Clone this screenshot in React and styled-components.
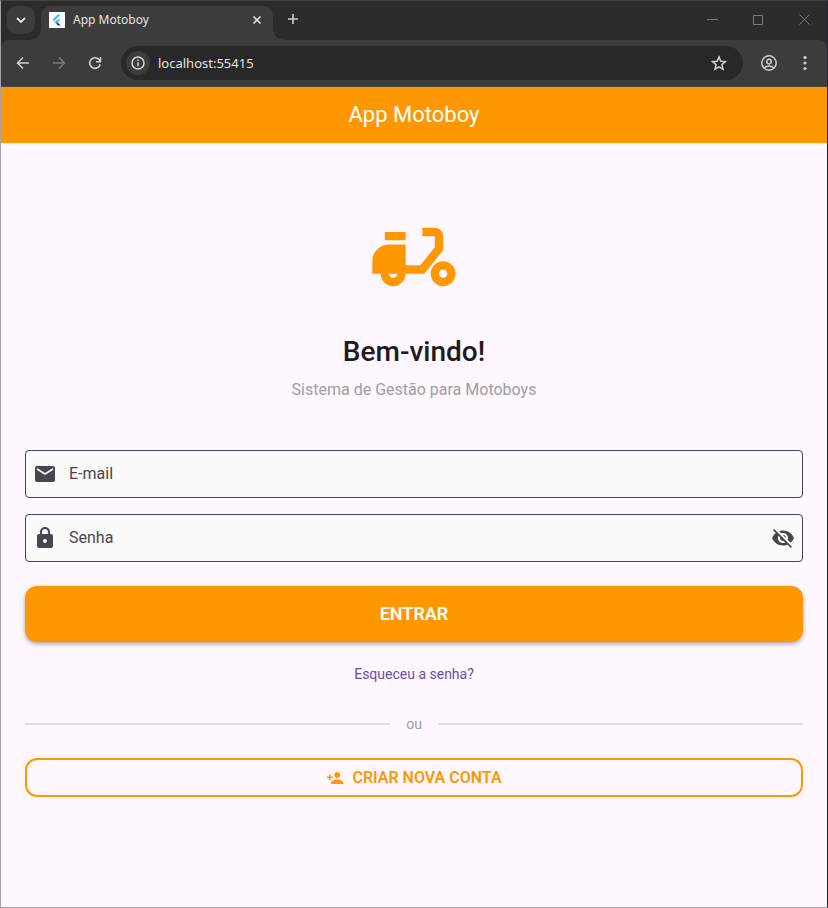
import React, { useState } from "react";
import styled, { createGlobalStyle } from "styled-components";
import {
  MdDeliveryDining,
  MdEmail,
  MdLock,
  MdPersonAdd,
  MdVisibility,
  MdVisibilityOff,
} from "react-icons/md";

const GlobalStyle = createGlobalStyle`
  *, *::before, *::after { box-sizing: border-box; }
  html { background: #fef7ff; }
  body { margin: 0; font-family: Roboto, sans-serif; }
  button, input { font: inherit; }
  button { padding: 0; border: 0; background: none; cursor: pointer; }
  svg { display: block; flex: none; }
`;

const Window = styled.div`
  display: flex;
  flex-direction: column;
  min-height: 100vh;
  border: 1px solid #a5a3a6;
  border-top-color: #444444;
  border-right-color: #23252b;
  background: #fef7ff;
`;

const BrowserChrome = styled.header`
  background: #2b2b2b;
  font-family: "Noto Sans", sans-serif;
  color: #e3e3e3;
`;

const TabStrip = styled.div`
  display: flex;
  height: 39px;
  padding-left: 6px;
`;

const TabSearch = styled.button`
  display: grid;
  place-items: center;
  width: 28px;
  height: 28px;
  margin-top: 5px;
  border-radius: 10px;
  background: #3c3c3c;
  color: #e3e3e3;
`;

const Tab = styled.div`
  position: relative;
  display: flex;
  align-items: center;
  flex: 0 1 232px;
  min-width: 0;
  height: 34px;
  margin: 5px 0 0 6px;
  padding: 0 10px 6px 8px;
  border-radius: 10px 10px 0 0;
  background: #3c3c3c;

  &::before,
  &::after {
    content: "";
    position: absolute;
    bottom: 0;
    width: 10px;
    height: 10px;
  }
  &::before {
    right: 100%;
    background: radial-gradient(circle at 0 0, transparent 9px, #3c3c3c 10px);
  }
  &::after {
    left: 100%;
    background: radial-gradient(circle at 100% 0, transparent 9px, #3c3c3c 10px);
  }
`;

const TabTitle = styled.span`
  flex: 1;
  min-width: 0;
  margin-left: 8px;
  overflow: hidden;
  font-size: 12px;
  line-height: 16px;
  white-space: nowrap;
`;

const ChromeButton = styled.button`
  display: grid;
  place-items: center;
  width: ${({ $width }) => $width || 36}px;
  height: 36px;
  color: ${({ $dim }) => ($dim ? "#7c7c7c" : "#d0d0d0")};
`;

const CloseTab = styled.button`
  display: grid;
  place-items: center;
  width: 12px;
  height: 16px;
  color: #e3e3e3;
`;

const NewTab = styled(ChromeButton)`
  margin-left: 2px;
`;

const WindowControls = styled.div`
  display: flex;
  margin-left: auto;
`;

const Toolbar = styled.div`
  display: flex;
  align-items: center;
  height: 47px;
  padding: 0 4px;
  border-bottom: 1px solid #4a4a4a;
  border-radius: 8px 8px 0 0;
  background: #3c3c3c;
`;

const AddressBar = styled.div`
  display: flex;
  align-items: center;
  flex: 1;
  min-width: 0;
  height: 34px;
  margin: 0 8px;
  padding: 0 6px 0 5px;
  border-radius: 17px;
  background: #282828;
`;

const SiteInfo = styled.button`
  display: grid;
  place-items: center;
  width: 24px;
  height: 24px;
  border-radius: 12px;
  background: #3c3c3c;
  color: #d8d8d8;
`;

const AddressInput = styled.input`
  flex: 1;
  min-width: 0;
  margin-left: 8px;
  padding: 0;
  border: 0;
  outline: 0;
  background: none;
  color: #e3e3e3;
  font-size: 13px;
  line-height: 20px;
`;

const AppBar = styled.header`
  display: grid;
  place-items: center;
  height: 56px;
  background: #ff9800;
`;

const AppTitle = styled.h1`
  margin: 0;
  color: #ffffff;
  font-size: 22px;
  font-weight: 400;
  line-height: 28px;
`;

const LoginPage = styled.main`
  display: flex;
  flex-direction: column;
  flex: 1;
  padding: 64px 24px 24px;
`;

const Brand = styled.section`
  display: flex;
  flex-direction: column;
  align-items: center;
  color: #ff9800;
`;

const Welcome = styled.h2`
  margin: 27px 0 8px;
  color: #1d1b20;
  font-size: 28px;
  font-weight: 500;
  line-height: 36px;
`;

const Subtitle = styled.p`
  margin: 0;
  color: #9e9e9e;
  font-size: 16px;
  line-height: 24px;
`;

const Form = styled.form`
  display: flex;
  flex-direction: column;
  margin-top: 48px;
`;

const Field = styled.div`
  display: flex;
  align-items: center;
  height: 48px;
  margin-bottom: ${({ $last }) => ($last ? 24 : 16)}px;
  padding: 0 7px;
  border: 1px solid #49454f;
  border-radius: 4px;
  background: #fafafa;
  color: #49454f;

  &:focus-within { border-color: #ff9800; }
`;

const FieldLabel = styled.label`
  margin-left: 12px;
  font-size: 16px;
  line-height: 24px;
`;

const FieldInput = styled.input`
  flex: 1;
  min-width: 0;
  margin: 0 12px;
  padding: 0;
  border: 0;
  outline: 0;
  background: none;
  color: #1d1b20;
  font-size: 16px;
  line-height: 24px;
`;

const IconButton = styled.button`
  color: #49454f;
`;

const SubmitButton = styled.button`
  height: 56px;
  border-radius: 12px;
  background: #ff9800;
  box-shadow: 0 2px 4px rgba(0, 0, 0, 0.34);
  color: #ffffff;
  font-size: 18px;
  font-weight: 600;
  line-height: 24px;
`;

const ForgotLink = styled.a`
  align-self: center;
  margin-top: 16px;
  padding: 6px 12px;
  color: #6750a4;
  font-size: 14px;
  line-height: 20px;
  text-decoration: none;
`;

const Separator = styled.div`
  display: flex;
  align-items: center;
  gap: 16px;
  margin: 24px 0;
  color: #9e9e9e;
  font-size: 14px;
  line-height: 20px;

  &::before,
  &::after {
    content: "";
    flex: 1;
    height: 2px;
    background: #e2dce5;
  }
`;

const CreateButton = styled.button`
  display: flex;
  align-items: center;
  justify-content: center;
  gap: 8px;
  height: 39px;
  border: 2px solid #ff9800;
  border-radius: 12px;
  color: #ff9800;
  font-size: 16px;
  font-weight: 600;
  line-height: 24px;
`;

function Stroke({ size = 16, width = 1.7, children }) {
  return (
    <svg width={size} height={size} viewBox={`0 0 ${size} ${size}`} fill="none" stroke="currentColor" strokeWidth={width} aria-hidden="true">
      {children}
    </svg>
  );
}

function FlutterLogo() {
  return (
    <svg width="16" height="16" viewBox="0 0 16 16" aria-hidden="true">
      <path fill="#fff" d="M0 0h16v16H0z" />
      <path fill="#42bdf5" d="M8.800 2.400h3L5 9.200 3.400 7.700z" />
      <path fill="#42bdf5" d="M8.800 7.200h3L8.600 10.400 7 8.900z" />
      <path fill="#1fa2ea" d="M5.700 10.200l1.400-1.400 1.500 1.500-1.400 1.400z" />
      <path fill="#0b4fa0" d="M7.200 11.700l1.400-1.400 3.200 3.200h-3z" />
    </svg>
  );
}

function Browser() {
  return (
    <BrowserChrome>
      <TabStrip>
        <TabSearch aria-label="Pesquisar guias">
          <Stroke size={10} width={1.8}><path d="M1 3l4 4 4-4" /></Stroke>
        </TabSearch>
        <Tab>
          <FlutterLogo />
          <TabTitle>App Motoboy</TabTitle>
          <CloseTab aria-label="Fechar guia">
            <Stroke size={10} width={1.6}><path d="M1.5 1.5l7 7M8.5 1.5l-7 7" /></Stroke>
          </CloseTab>
        </Tab>
        <NewTab aria-label="Nova guia">
          <Stroke size={12} width={1.6}><path d="M6 1v10M1 6h10" /></Stroke>
        </NewTab>
        <WindowControls>
          <ChromeButton $width={46} $dim aria-label="Minimizar">
            <Stroke size={11} width={1}><path d="M0 5.5h11" /></Stroke>
          </ChromeButton>
          <ChromeButton $width={46} $dim aria-label="Maximizar">
            <Stroke size={11} width={1}><path d="M.5 1.5h9v9h-9z" /></Stroke>
          </ChromeButton>
          <ChromeButton $width={46} $dim aria-label="Fechar">
            <Stroke size={11} width={1}><path d="M.5.5l10 10M10.5.5l-10 10" /></Stroke>
          </ChromeButton>
        </WindowControls>
      </TabStrip>
      <Toolbar>
        <ChromeButton aria-label="Voltar">
          <Stroke width={1.5}><path d="M14 8H3M8 2.500L2.500 8 8 13.500" /></Stroke>
        </ChromeButton>
        <ChromeButton $dim aria-label="Avançar">
          <Stroke width={1.5}><path d="M2 8h11M8 2.500L13.500 8 8 13.500" /></Stroke>
        </ChromeButton>
        <ChromeButton aria-label="Recarregar">
          <Stroke width={1.6}><path d="M13.200 9.200A5.300 5.300 0 1 1 12.100 4.600L13.500 6.200M13.500 2v4.700H9" /></Stroke>
        </ChromeButton>
        <AddressBar>
          <SiteInfo aria-label="Informações do site">
            <Stroke size={14} width={1.5}>
              <circle cx="7" cy="7" r="6" />
              <path d="M7 6.2v4M7 3.6v1.5" />
            </Stroke>
          </SiteInfo>
          <AddressInput aria-label="Endereço" defaultValue="localhost:55415" />
          <ChromeButton aria-label="Adicionar aos favoritos">
            <Stroke width={1.5}>
              <path d="M8 1.9l1.8 4.3 4.6.4-3.5 3 1.1 4.6L8 11.8l-4 2.4 1.1-4.6-3.5-3 4.6-.4z" />
            </Stroke>
          </ChromeButton>
        </AddressBar>
        <ChromeButton aria-label="Perfil">
          <Stroke width={1.5}>
            <circle cx="8" cy="8" r="7.2" />
            <circle cx="8" cy="6.6" r="2.3" />
            <path d="M3 13c1.4-1.4 3-2 5-2s3.6 .6 5 2" />
          </Stroke>
        </ChromeButton>
        <ChromeButton aria-label="Menu">
          <svg width="16" height="16" viewBox="0 0 16 16" fill="currentColor" aria-hidden="true">
            <circle cx="8" cy="2.5" r="1.6" />
            <circle cx="8" cy="8" r="1.6" />
            <circle cx="8" cy="13.5" r="1.6" />
          </svg>
        </ChromeButton>
      </Toolbar>
    </BrowserChrome>
  );
}

export default function App() {
  const [visible, setVisible] = useState(false);

  return (
    <Window>
      <GlobalStyle />
      <Browser />
      <AppBar>
        <AppTitle>App Motoboy</AppTitle>
      </AppBar>
      <LoginPage>
        <Brand>
          <MdDeliveryDining size={100} aria-hidden="true" />
          <Welcome>Bem-vindo!</Welcome>
          <Subtitle>Sistema de Gestão para Motoboys</Subtitle>
        </Brand>
        <Form onSubmit={(event) => event.preventDefault()}>
          <Field>
            <MdEmail size={24} aria-hidden="true" />
            <FieldLabel htmlFor="email">E-mail</FieldLabel>
            <FieldInput id="email" type="email" />
          </Field>
          <Field $last>
            <MdLock size={24} aria-hidden="true" />
            <FieldLabel htmlFor="senha">Senha</FieldLabel>
            <FieldInput id="senha" type={visible ? "text" : "password"} />
            <IconButton type="button" aria-label="Mostrar senha" onClick={() => setVisible(!visible)}>
              {visible ? <MdVisibility size={24} /> : <MdVisibilityOff size={24} />}
            </IconButton>
          </Field>
          <SubmitButton type="submit">ENTRAR</SubmitButton>
          <ForgotLink href="#recuperar">Esqueceu a senha?</ForgotLink>
          <Separator>ou</Separator>
          <CreateButton type="button">
            <MdPersonAdd size={18} aria-hidden="true" />
            CRIAR NOVA CONTA
          </CreateButton>
        </Form>
      </LoginPage>
    </Window>
  );
}
